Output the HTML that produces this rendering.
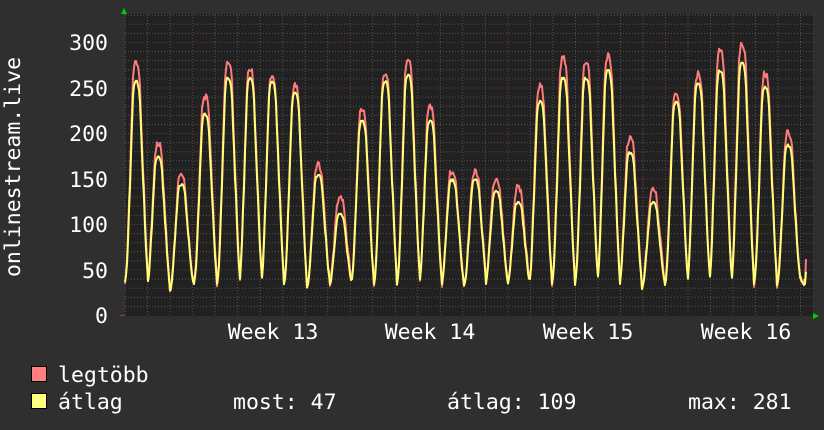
<!DOCTYPE html>
<html><head><meta charset="utf-8"><style>
html,body{margin:0;padding:0;background:#2f2f2f;}
body{width:824px;height:430px;overflow:hidden;position:relative;font-family:"DejaVu Sans Mono","Liberation Mono",monospace;color:#fff;}
svg{position:absolute;left:0;top:0;}
svg text{font-family:"DejaVu Sans Mono","Liberation Mono",monospace;font-size:21.5px;fill:#fff;}
</style></head><body>
<svg id="g" width="824" height="430" xmlns="http://www.w3.org/2000/svg">
<rect x="125" y="14" width="688" height="302" fill="#212121"/>
<g id="grid"></g>
<path id="red" d="" fill="none" stroke="#ff7b7b" stroke-width="2" stroke-linejoin="round"/>
<path id="yel" d="" fill="none" stroke="#ffff77" stroke-width="2" stroke-linejoin="round"/>
<polygon points="121,14 127,14 124,8" fill="#00cc00"/>
<polygon points="813,313 813,319 819,316" fill="#00cc00"/>
<g text-anchor="end">
<text x="108" y="50">300</text><text x="108" y="96">250</text><text x="108" y="141">200</text>
<text x="108" y="187">150</text><text x="108" y="232">100</text><text x="108" y="278">50</text><text x="108" y="323">0</text>
</g>
<text transform="translate(20,167) rotate(-90)" text-anchor="middle">onlinestream.live</text>
<g text-anchor="middle">
<text x="273" y="339">Week 13</text><text x="430" y="339">Week 14</text><text x="588" y="339">Week 15</text><text x="746" y="339">Week 16</text>
</g>
<rect x="31.5" y="366.5" width="15" height="15" fill="#ff7f7f" stroke="#000"/>
<rect x="31.5" y="393.5" width="15" height="15" fill="#ffff7f" stroke="#000"/>
<text x="58" y="382">legtöbb</text>
<text x="58" y="409">átlag</text>
<text x="233" y="409">most: 47</text>
<text x="447" y="409">átlag: 109</text>
<text x="688" y="409">max: 281</text>
</svg>
<script>
(function(){
var g=document.getElementById("grid"),h="";
var y0=315.5,k=0.91;
for(var v=10;v<=330;v+=10){var y=y0-v*k;if(y<14)break;
 var maj=v%50==0;h+='<line x1="125" x2="813" y1="'+y+'" y2="'+y+'" stroke="'+(maj?'#6e3c3c':'#555')+'" stroke-dasharray="1,2"/>';}
for(var i=0;i<31;i++){var x=125+i*22.52;var maj=Math.abs(((x-193)/157.67)-Math.round((x-193)/157.67))<0.02;
 h+='<line y1="14" y2="316" x1="'+x+'" x2="'+x+'" stroke="'+(maj?'#6e3c3c':'#555')+'" stroke-dasharray="1,2"/>';}
h+='<line x1="120" x2="125" y1="315.5" y2="315.5" stroke="#a33"/>';
g.innerHTML=h;
var peaks=[[136,278,258],[158,188,175],[181,153,145],[205,240,222],[228,280,262],[250,270,262],[272,262,258],[295,253,245],[318,165,155],[340,128,112],[362,225,215],[385,265,258],[408,280,265],[430,228,215],[452,158,150],[475,158,150],[496,150,138],[518,140,125],[540,252,236],[563,282,262],[586,278,262],[608,285,270],[630,195,180],[653,137,125],[676,245,235],[698,265,255],[720,290,270],[742,298,278],[765,265,252],[788,200,188]];
var troughs=[32,30,25,32,30,30,30,30,28,30,30,30,30,30,28,30,30,30,30,30,30,30,28,28,30,30,30,28,30,30,35];
var s=1;function rnd(){s=(s*9301+49297)%233280;return s/233280;}
function build(idx){var d="",first=true;
 for(var x=125;x<=806;x+=1){
  var bi=0;for(var j=0;j<peaks.length;j++){if(Math.abs(x-peaks[j][0])<Math.abs(x-peaks[bi][0]))bi=j;}
  var p=peaks[bi],dx=x-p[0];var tr=troughs[bi+(dx>0?1:0)]||30;
  var w=dx<0?7:8.5;var f=Math.exp(-Math.pow(Math.abs(dx)/w,3));
  var P=p[idx];var v=tr+(P-tr)*f;
  if(f>0.5&&f<0.85)v-=(P-tr)*0.05;
  v+=(rnd()-0.5)*(idx==1?8:5);
  if(idx==2) v=Math.min(v,tr+(P-tr)*f);
  if(x>=806) v=idx==1?62:48;
  var y=(y0-v*k).toFixed(1);
  d+=(first?"M":"L")+x+","+y;first=false;}
 return d;}
document.getElementById("red").setAttribute("d",build(1));
s=7;document.getElementById("yel").setAttribute("d",build(2));
})();
</script>
</body></html>
